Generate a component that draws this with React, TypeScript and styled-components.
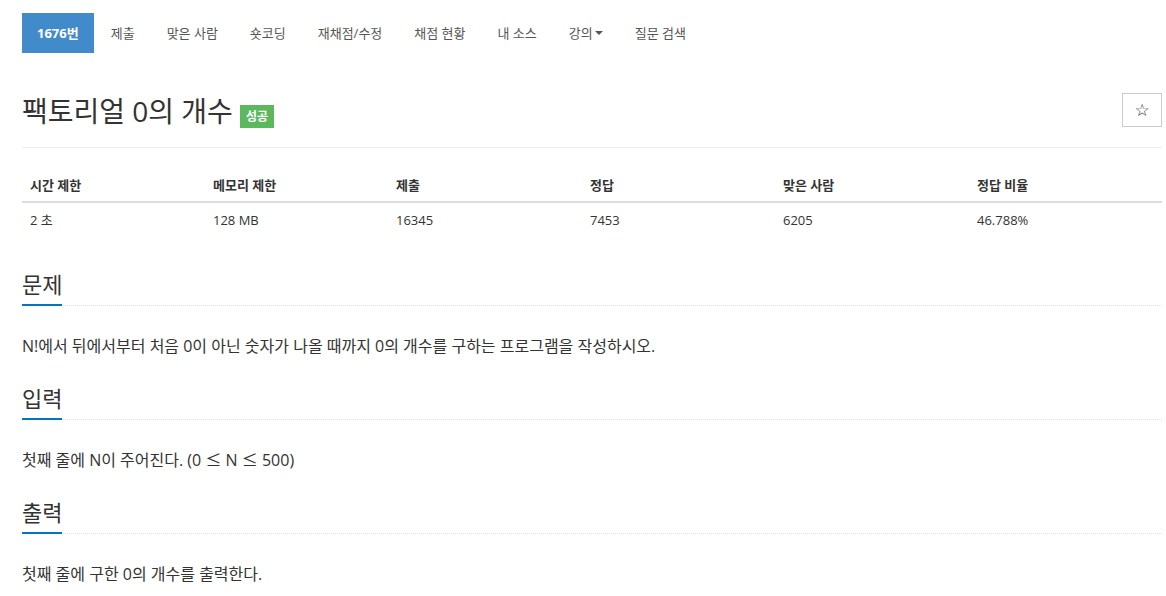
import React from "react";
import styled, { createGlobalStyle } from "styled-components";

const GlobalStyle = createGlobalStyle`
  html, body { margin: 0; padding: 0; background: #fff; }
  body {
    font-family: "Open Sans", "Noto Sans CJK KR", sans-serif;
    color: #333;
  }
  * { box-sizing: border-box; }
`;

const Page = styled.div`
  width: 1140px;
  margin-left: 22px;
`;

const Nav = styled.ul`
  display: flex;
  list-style: none;
  margin: 13px 0 0 0;
  padding: 0;
  gap: 2px;
`;

const NavItem = styled.li<{ $active?: boolean }>`
  height: 40px;
  line-height: 40px;
  padding: 0 15px;
  font-size: 13px;
  font-weight: ${(p) => (p.$active ? 700 : 400)};
  color: ${(p) => (p.$active ? "#fff" : "#555")};
  background: ${(p) => (p.$active ? "#428bca" : "transparent")};
  display: flex;
  align-items: center;
  white-space: nowrap;
`;

const Caret = styled.span`
  display: inline-block;
  width: 0;
  height: 0;
  margin-left: 2px;
  border-top: 4px solid #555;
  border-left: 4px solid transparent;
  border-right: 4px solid transparent;
`;

const Header = styled.div`
  display: flex;
  align-items: flex-start;
  justify-content: space-between;
  margin-top: 40px;
  padding-bottom: 18px;
  border-bottom: 1px solid #eee;
`;

const Title = styled.h1`
  display: flex;
  align-items: flex-start;
  margin: 0;
  font-size: 28px;
  line-height: 36px;
  font-weight: 400;
  color: #333;
`;

const Badge = styled.span`
  margin: 12px 0 0 7px;
  height: 23px;
  padding: 0 6px;
  background: #5cb85c;
  color: #fff;
  font-size: 12px;
  font-weight: 700;
  line-height: 23px;
`;

const StarButton = styled.button`
  width: 40px;
  height: 34px;
  border: 1px solid #ccc;
  background: #fff;
  padding: 0;
  font-family: "DejaVu Sans", sans-serif;
  font-size: 17px;
  line-height: 1;
  color: #333;
  display: flex;
  align-items: center;
  justify-content: center;
`;

const Table = styled.div`
  display: grid;
  grid-template-columns: 183px 183px 194px 193px 194px 193px;
  margin-top: 19px;
`;

const HeadCell = styled.div`
  padding: 8px 8px 6px;
  line-height: 20px;
  font-size: 13px;
  font-weight: 700;
  color: #333;
  border-bottom: 2px solid #ddd;
`;

const Cell = styled.div`
  padding: 7px 8px;
  line-height: 20px;
  font-size: 13px;
  color: #333;
`;

const Section = styled.section`
  margin-top: 33px;
  & + & { margin-top: 26px; }
`;

const Headline = styled.h2`
  display: flex;
  align-items: flex-end;
  margin: 0;
  border-bottom: 1px dotted #ddd;
  font-size: 22px;
  font-weight: 400;
  color: #333;
`;

const HeadlineText = styled.span`
  line-height: 28px;
  padding-bottom: 6px;
  border-bottom: 2px solid #0076c0;
  margin-bottom: -1px;
`;

const Para = styled.p`
  margin: 28px 0 0;
  font-size: 16px;
  line-height: 24px;
  color: #333;
`;

const MathSym = styled.span`
  font-family: "Noto Sans CJK KR", sans-serif;
  line-height: 1;
`;

const navItems = ["제출", "맞은 사람", "숏코딩", "재채점/수정", "채점 현황", "내 소스"];

const stats = [
  ["시간 제한", "2 초"],
  ["메모리 제한", "128 MB"],
  ["제출", "16345"],
  ["정답", "7453"],
  ["맞은 사람", "6205"],
  ["정답 비율", "46.788%"],
];

const sections: [string, React.ReactNode][] = [
  ["문제", "N!에서 뒤에서부터 처음 0이 아닌 숫자가 나올 때까지 0의 개수를 구하는 프로그램을 작성하시오."],
  [
    "입력",
    <>
      첫째 줄에 N이 주어진다. (0 <MathSym>≤</MathSym> N <MathSym>≤</MathSym> 500)
    </>,
  ],
  ["출력", "첫째 줄에 구한 0의 개수를 출력한다."],
];

export default function App() {
  return (
    <>
      <GlobalStyle />
      <Page>
        <Nav>
          <NavItem $active>1676번</NavItem>
          {navItems.map((n) => (
            <NavItem key={n}>{n}</NavItem>
          ))}
          <NavItem>
            강의
            <Caret />
          </NavItem>
          <NavItem>질문 검색</NavItem>
        </Nav>
        <Header>
          <Title>
            팩토리얼 0의 개수
            <Badge>성공</Badge>
          </Title>
          <StarButton>☆</StarButton>
        </Header>
        <Table>
          {stats.map(([h]) => (
            <HeadCell key={h}>{h}</HeadCell>
          ))}
          {stats.map(([h, v]) => (
            <Cell key={h}>{v}</Cell>
          ))}
        </Table>
        {sections.map(([h, t]) => (
          <Section key={h}>
            <Headline>
              <HeadlineText>{h}</HeadlineText>
            </Headline>
            <Para>{t}</Para>
          </Section>
        ))}
      </Page>
    </>
  );
}
